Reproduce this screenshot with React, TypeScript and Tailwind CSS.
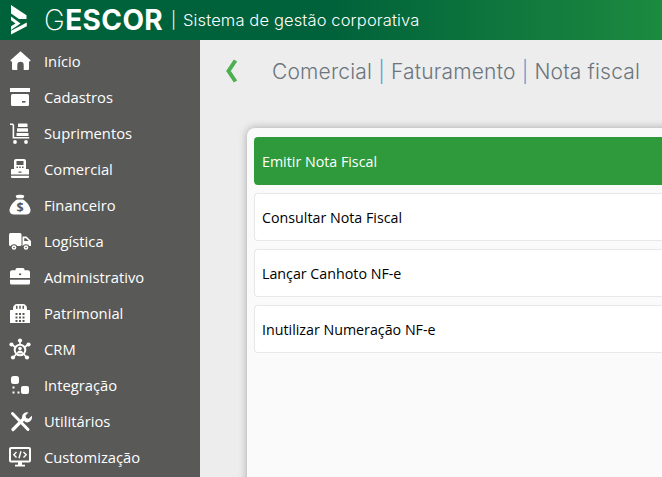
import React from "react";

const DARK = "#595957";

const Ico = ({ children }: { children: React.ReactNode }) => (
  <svg viewBox="0 0 24 24" width="24" height="24" fill="#fff">{children}</svg>
);

const Home = () => (
  <Ico>
    <path d="M12.500 1.200L22.300 10c.5.600.1 1.400-.7 1.400H21V19a1 1 0 0 1-1 1h-4.300v-5a3.200 3.200 0 0 0-6.400 0v5H5a1 1 0 0 1-1-1v-7.600h-.6c-.8 0-1.200-.8-.7-1.400z" />
  </Ico>
);
const Archive = () => (
  <Ico>
    <rect x="2" y="2" width="20" height="4" />
    <rect x="3" y="8" width="18" height="12" rx="1.500" />
    <rect x="14" y="15" width="3.500" height="1.600" fill={DARK} />
  </Ico>
);
const Cart = () => (
  <Ico>
    <path d="M2 1.500h3l1.200 1.500v12h15v1.600H4.600V3.400L4.200 3H2z" />
    <rect x="10" y="1.500" width="9.500" height="3.500" rx=".5" />
    <rect x="9" y="6.300" width="11" height="3.500" rx=".5" />
    <rect x="8.500" y="11" width="12" height="3" rx=".5" />
    <circle cx="7" cy="20" r="1.900" />
    <circle cx="18" cy="20" r="1.900" />
  </Ico>
);
const Register = () => (
  <Ico>
    <path d="M8 1h8a2 2 0 0 1 2 2v8h2a1 1 0 0 1 1 1v4.500H3V12a1 1 0 0 1 1-1h2V3a2 2 0 0 1 2-2z" />
    <rect x="8.500" y="3" width="7" height="4" fill={DARK} />
    <g fill={DARK}>
      <rect x="8.500" y="8.500" width="1.500" height="1.500" /><rect x="11.250" y="8.500" width="1.500" height="1.500" /><rect x="14" y="8.500" width="1.500" height="1.500" />
      <rect x="10.500" y="13.500" width="3" height="1.200" />
    </g>
    <path d="M3 17.700h18V19a1 1 0 0 1-1 1H4a1 1 0 0 1-1-1z" />
  </Ico>
);
const Sack = () => (
  <Ico>
    <path d="M8 1.500c1.500-1 6.500-1 8 0 .6.500 0 1.500-1 2.800H9c-1-1.300-1.600-2.300-1-2.800z" />
    <path d="M9 5.500h6c4 2.500 7.500 7 7.500 11 0 2.800-2 4-4.500 4H6c-2.500 0-4.500-1.200-4.500-4 0-4 3.500-8.500 7.500-11z" />
    <text x="12" y="18" textAnchor="middle" fontSize="12.500" fontWeight="700" fontFamily="'Open Sans',sans-serif" fill={DARK}>$</text>
  </Ico>
);
const Truck = () => (
  <Ico>
    <rect x="1" y="3" width="12.500" height="13" rx="1.500" />
    <path d="M14.500 6.500h4l4.500 4.500v5h-8.500z" />
    <path d="M16.200 8.200h1.800l2.700 2.800h-4.500z" fill={DARK} />
    <circle cx="6" cy="17.500" r="3.300" fill={DARK} /><circle cx="6" cy="17.500" r="2.300" /><circle cx="6" cy="17.500" r=".8" fill={DARK} />
    <circle cx="18" cy="17.500" r="3.300" fill={DARK} /><circle cx="18" cy="17.500" r="2.300" /><circle cx="18" cy="17.500" r=".8" fill={DARK} />
  </Ico>
);
const Briefcase = () => (
  <Ico>
    <path d="M7.500 4.200V3.500a1.500 1.500 0 0 1 1.500-1.500h6a1.500 1.500 0 0 1 1.500 1.500v.7H20a2 2 0 0 1 2 2V12H2V6.200a2 2 0 0 1 2-2z" />
    <rect x="11" y="7.500" width="2.200" height="1.600" fill={DARK} />
    <path d="M2 13.800h20V17a1.500 1.500 0 0 1-1.500 1.500h-17A1.500 1.500 0 0 1 2 17z" />
  </Ico>
);
const Building = () => (
  <Ico>
    <path d="M5 6.500C5 3.500 7 2 9 2h6c2 0 4 1.500 4 4.500V8h2.500a.5.500 0 0 1 .5.500V21H2V8.500a.5.500 0 0 1 .5-.5H5z" />
    <g fill={DARK}>
      <rect x="8" y="3.800" width="1.500" height="3" /><rect x="11.250" y="3.800" width="1.500" height="3" /><rect x="14.500" y="3.800" width="1.500" height="3" />
      <rect x="7.500" y="11" width="2" height="2" /><rect x="11" y="11" width="2" height="2" /><rect x="14.500" y="11" width="2" height="2" />
      <rect x="7.500" y="14.500" width="2" height="2" /><rect x="11" y="14.500" width="2" height="2" /><rect x="14.500" y="14.500" width="2" height="2" />
      <rect x="7.500" y="18" width="2" height="2" /><rect x="11" y="18" width="2" height="2" /><rect x="14.500" y="18" width="2" height="2" />
    </g>
  </Ico>
);
const Crm = () => (
  <Ico>
    <g stroke="#fff" strokeWidth="1.700" fill="none">
      <path d="M12 2.500v4M3.500 6.500l4.500 3M20.500 6.500l-4.500 3M5 19.500l3.500-3.500M19 19.500L15.500 16" />
      <circle cx="12" cy="12" r="5.300" strokeWidth="2" />
    </g>
    <circle cx="12" cy="2.500" r="2.100" /><circle cx="3.500" cy="6.500" r="2.100" /><circle cx="20.500" cy="6.500" r="2.100" />
    <circle cx="5" cy="19.500" r="2.100" /><circle cx="19" cy="19.500" r="2.100" />
    <circle cx="12" cy="10.500" r="1.800" />
    <path d="M8.800 15.500c.2-2 1.500-3 3.200-3s3 1 3.200 3z" />
  </Ico>
);
const Integration = () => (
  <Ico>
    <rect x="3" y="2" width="8" height="8" rx="2.500" />
    <rect x="13" y="12" width="8" height="8" rx="2" />
    <rect x="4.500" y="12.500" width="2" height="2" /><rect x="4.500" y="17.500" width="2" height="2" /><rect x="9.500" y="17.500" width="2" height="2" />
  </Ico>
);
const Tools = () => (
  <Ico>
    <path d="M4.500 3.500L20 19.500" stroke="#fff" strokeWidth="3" strokeLinecap="round" />
    <path d="M5 19.500L16 8.500" stroke="#fff" strokeWidth="3.200" strokeLinecap="round" />
    <path d="M14 7.500a5 5 0 0 1 6.500-5l-3 3 .6 2.600 2.600.6 3-3a5 5 0 0 1-6.500 6.300z" />
  </Ico>
);
const Monitor = () => (
  <Ico>
    <rect x="2" y="2" width="20" height="13.500" rx="1" fill="none" stroke="#fff" strokeWidth="2" />
    <rect x="10" y="16" width="4" height="3" />
    <rect x="7" y="18.700" width="10" height="1.800" />
    <path d="M8.500 6L5.800 8.800l2.700 2.800M15.500 6l2.700 2.800-2.700 2.800M13 5.300l-2 7" stroke="#fff" strokeWidth="1.400" fill="none" />
  </Ico>
);

const Logo = () => (
  <svg viewBox="0 0 20 30" width="20" height="30" fill="#fff">
    <path d="M1 0l15.500 10.200V14H9L1 8.500z" />
    <path d="M1 11.500l9.500 7L1 25v-3.700l4.500-2.800L1 15.300z" />
    <path d="M16.800 17.500v3.700L1 29.500v-3.800z" />
  </svg>
);

const nav: [string, React.ReactNode][] = [
  ["Início", <Home />],
  ["Cadastros", <Archive />],
  ["Suprimentos", <Cart />],
  ["Comercial", <Register />],
  ["Financeiro", <Sack />],
  ["Logística", <Truck />],
  ["Administrativo", <Briefcase />],
  ["Patrimonial", <Building />],
  ["CRM", <Crm />],
  ["Integração", <Integration />],
  ["Utilitários", <Tools />],
  ["Customização", <Monitor />],
];

const items = ["Emitir Nota Fiscal", "Consultar Nota Fiscal", "Lançar Canhoto NF-e", "Inutilizar Numeração NF-e"];

export default function App() {
  return (
    <div className="h-[477px] w-[662px] overflow-hidden flex flex-col bg-[#ededed] font-['Open_Sans',sans-serif]">
      <header className="h-10 shrink-0 flex items-center text-white bg-gradient-to-r from-[#00623a] from-50% to-[#1c8a3f]">
        <div className="w-[44px] pl-[10px] flex items-center"><Logo /></div>
        <span className="text-[28px] leading-none tracking-[0.4px] font-['Inter',sans-serif] w-[118px] whitespace-nowrap"><span className="font-extralight">G</span><span className="font-bold">ESCOR</span></span>
        <span className="text-[16.5px] font-['Inter',sans-serif] font-light ml-[9px] tracking-[0.13px] whitespace-nowrap"><span className="mr-[2px]">|</span> Sistema de gestão corporativa</span>
      </header>
      <div className="flex flex-1 min-h-0">
        <aside className="w-[200px] shrink-0 bg-[#595957] text-white pt-1">
          {nav.map(([label, icon]) => (
            <div key={label} className="h-9 flex items-center text-[14.75px]">
              <div className="w-[44px] pl-[8px] flex items-center">{icon}</div>
              <span className="-mt-[2px]">{label}</span>
            </div>
          ))}
        </aside>
        <main className="flex-1 min-w-0 pl-[22px] overflow-hidden">
          <div className="h-[88px] pt-[18px] flex items-start">
            <svg viewBox="0 0 14 24" width="14" height="24" className="mt-[1px] ml-[3px]">
              <path d="M10.500 1.500L3.500 12l7 10.500" stroke="#4caf50" strokeWidth="4" fill="none" />
            </svg>
            <h1 className="ml-[33px] text-[21px] leading-7 tracking-[0.18px] text-[#6c757d] font-['Inter',sans-serif] font-light whitespace-nowrap">
              Comercial <span className="text-[#5b9bd5]">|</span> Faturamento <span className="text-[#5b9bd5]">|</span> Nota fiscal
            </h1>
          </div>
          <section className="ml-[25px] w-[500px] h-[400px] bg-[#fafafa] rounded-tl-lg shadow-[0_0_8px_rgba(0,0,0,0.3)] pl-[7px] pt-[9px] flex flex-col gap-2">
            {items.map((t, i) => (
              <div key={t} className={`h-12 flex items-center pt-[2px] rounded-l text-[14.25px] ${i === 0 ? "pl-2 bg-[#2f9a3c] text-white" : "pl-[7px] bg-white text-black border border-r-0 border-[#e8e8e8]"}`}>
                {t}
              </div>
            ))}
          </section>
        </main>
      </div>
    </div>
  );
}
